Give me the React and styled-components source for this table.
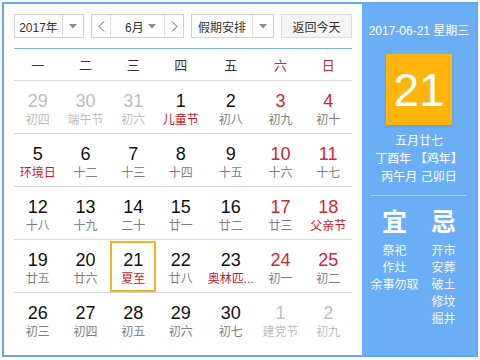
import styled, { createGlobalStyle } from "styled-components";

const Global = createGlobalStyle`
  html, body { margin: 0; padding: 0; background: #fff; }
  body { font-family: "Liberation Sans", "Noto Sans CJK SC", sans-serif; }
`;

//달력 데이터 (2017년 6월)
const weekNames = ["一", "二", "三", "四", "五", "六", "日"];

const rows = [
  [
    { d: 29, l: "初四", off: true },
    { d: 30, l: "端午节", off: true },
    { d: 31, l: "初六", off: true },
    { d: 1, l: "儿童节", fest: true },
    { d: 2, l: "初八" },
    { d: 3, l: "初九" },
    { d: 4, l: "初十" },
  ],
  [
    { d: 5, l: "环境日", fest: true },
    { d: 6, l: "十二" },
    { d: 7, l: "十三" },
    { d: 8, l: "十四" },
    { d: 9, l: "十五" },
    { d: 10, l: "十六" },
    { d: 11, l: "十七" },
  ],
  [
    { d: 12, l: "十八" },
    { d: 13, l: "十九" },
    { d: 14, l: "二十" },
    { d: 15, l: "廿一" },
    { d: 16, l: "廿二" },
    { d: 17, l: "廿三" },
    { d: 18, l: "父亲节", fest: true },
  ],
  [
    { d: 19, l: "廿五" },
    { d: 20, l: "廿六" },
    { d: 21, l: "夏至", fest: true, today: true },
    { d: 22, l: "廿八" },
    { d: 23, l: "奥林匹...", fest: true },
    { d: 24, l: "初一" },
    { d: 25, l: "初二" },
  ],
  [
    { d: 26, l: "初三" },
    { d: 27, l: "初四" },
    { d: 28, l: "初五" },
    { d: 29, l: "初六" },
    { d: 30, l: "初七" },
    { d: 1, l: "建党节", off: true },
    { d: 2, l: "初九", off: true },
  ],
];

const Arrow = () => (
  <svg width="8" height="5" viewBox="0 0 8 5">
    <polygon points="0,0 8,0 4,4.5" fill="#8a8a8a" />
  </svg>
);

const Chevron = ({ dir }) => (
  <svg width="7" height="11" viewBox="0 0 7 11">
    <polyline
      points={dir === "left" ? "6,0.5 1,5.5 6,10.5" : "1,0.5 6,5.5 1,10.5"}
      fill="none"
      stroke="#555"
      strokeWidth="1"
    />
  </svg>
);

export default function App() {
  return (
    <>
      <Global />
      <Widget>
        <Main>
          <Toolbar>
            <SelectBox $w={70}>
              <span className="text">2017年</span>
              <span className="arrow">
                <Arrow />
              </span>
            </SelectBox>
            <MonthBox>
              <span className="nav">
                <Chevron dir="left" />
              </span>
              <span className="mid">
                <span>6月</span>
                <Arrow />
              </span>
              <span className="nav right">
                <Chevron dir="right" />
              </span>
            </MonthBox>
            <SelectBox $w={83}>
              <span className="text">假期安排</span>
              <span className="arrow">
                <Arrow />
              </span>
            </SelectBox>
            <TodayButton>返回今天</TodayButton>
          </Toolbar>

          <Grid>
            {weekNames.map((w, i) => (
              <WeekHead key={w} $red={i >= 5}>
                {w}
              </WeekHead>
            ))}
            {rows.map((row, ri) =>
              row.map((c, ci) => (
                <Cell key={ri + "-" + ci} $last={ri === rows.length - 1}>
                  <DayBox $today={c.today}>
                    <DayNum $off={c.off} $red={!c.off && ci >= 5}>
                      {c.d}
                    </DayNum>
                    <Lunar $off={c.off} $fest={!c.off && c.fest}>
                      {c.l}
                    </Lunar>
                  </DayBox>
                </Cell>
              ))
            )}
          </Grid>
        </Main>

        <Side>
          <DateLine>2017-06-21 星期三</DateLine>
          <BigDay>21</BigDay>
          <LunarInfo>
            <div>五月廿七</div>
            <div>丁酉年 【鸡年】</div>
            <div>丙午月 己卯日</div>
          </LunarInfo>
          <Divider />
          <Almanac>
            <AlmanacCol>
              <h3>宜</h3>
              <span>祭祀</span>
              <span>作灶</span>
              <span>余事勿取</span>
            </AlmanacCol>
            <AlmanacCol>
              <h3>忌</h3>
              <span>开市</span>
              <span>安葬</span>
              <span>破土</span>
              <span>修坟</span>
              <span>掘井</span>
            </AlmanacCol>
          </Almanac>
        </Side>
      </Widget>
    </>
  );
}

const Widget = styled.div`
  margin: 2px;
  width: 472px;
  height: 351px;
  border: 2px solid #63a8f0;
  display: flex;
  background: #fff;
`;

const Main = styled.div`
  width: 338px;
  padding: 10px 10px 0 10px;
`;

const Toolbar = styled.div`
  display: flex;
  gap: 7px;
  height: 24px;
  padding-bottom: 10px;
  border-bottom: 1px solid #7db5ea;
  font-size: 12px;
  color: #333;
`;

const SelectBox = styled.div`
  width: ${(p) => p.$w}px;
  box-sizing: border-box;
  height: 24px;
  border: 1px solid #d2d2d2;
  display: flex;
  background: #fff;
  .text {
    flex: 1;
    display: flex;
    align-items: center;
    justify-content: center;
  }
  .arrow {
    width: 20px;
    border-left: 1px solid #e0e0e0;
    display: flex;
    align-items: center;
    justify-content: center;
  }
`;

const MonthBox = styled.div`
  width: 93px;
  box-sizing: border-box;
  height: 24px;
  border: 1px solid #d2d2d2;
  display: flex;
  .nav {
    width: 18px;
    display: flex;
    align-items: center;
    justify-content: center;
    border-right: 1px solid #e0e0e0;
  }
  .nav.right {
    border-right: none;
    border-left: 1px solid #e0e0e0;
  }
  .mid {
    flex: 1;
    display: flex;
    align-items: center;
    justify-content: space-between;
    padding: 0 8px 0 14px;
  }
`;

const TodayButton = styled.div`
  width: 71px;
  box-sizing: border-box;
  height: 24px;
  border: 1px solid #dcdcdc;
  background: #f4f4f4;
  display: flex;
  align-items: center;
  justify-content: center;
`;

const Grid = styled.div`
  display: grid;
  grid-template-columns: repeat(7, 1fr);
  grid-auto-rows: 53px;
  grid-template-rows: 32px;
`;

const WeekHead = styled.div`
  display: flex;
  align-items: center;
  justify-content: center;
  font-size: 13px;
  color: ${(p) => (p.$red ? "#c8283a" : "#333")};
  border-bottom: 1px solid #d8d8d8;
`;

const Cell = styled.div`
  border-bottom: ${(p) => (p.$last ? "none" : "1px solid #d8d8d8")};
  padding: 1px 1px 0;
  display: flex;
`;

const DayBox = styled.div`
  flex: 1;
  box-sizing: border-box;
  border: 2px solid ${(p) => (p.$today ? "#f7b21d" : "transparent")};
  display: flex;
  flex-direction: column;
  align-items: center;
  padding-top: 6px;
`;

const DayNum = styled.div`
  font-size: 18px;
  line-height: 22px;
  color: ${(p) => (p.$off ? "#bdbdbd" : p.$red ? "#d0253a" : "#111")};
`;

const Lunar = styled.div`
  font-size: 12px;
  line-height: 16px;
  white-space: nowrap;
  color: ${(p) => (p.$off ? "#bdbdbd" : p.$fest ? "#c8192e" : "#808080")};
`;

const Side = styled.div`
  flex: 1;
  background: #6aaef6;
  color: #fff;
  display: flex;
  flex-direction: column;
  align-items: center;
`;

const DateLine = styled.div`
  font-size: 12px;
  margin-top: 18px;
  line-height: 18px;
`;

const BigDay = styled.div`
  margin-top: 14px;
  width: 66px;
  height: 71px;
  background: #ffb50c;
  display: flex;
  align-items: center;
  justify-content: center;
  font-size: 46px;
  box-shadow: 0 1px 2px rgba(0, 0, 0, 0.15);
`;

const LunarInfo = styled.div`
  margin-top: 7px;
  font-size: 12px;
  line-height: 18px;
  text-align: center;
`;

const Divider = styled.div`
  width: 96px;
  height: 1px;
  background: #a9d0fb;
  margin-top: 9px;
`;

const Almanac = styled.div`
  display: grid;
  grid-template-columns: 49px 49px;
  margin-top: 12px;
`;

const AlmanacCol = styled.div`
  display: flex;
  flex-direction: column;
  align-items: center;
  font-size: 12px;
  line-height: 17px;
  color: #f4f8ff;
  h3 {
    margin: 0 0 7px;
    font-size: 25px;
    line-height: 28px;
    font-weight: bold;
    color: #fff;
  }
`;
